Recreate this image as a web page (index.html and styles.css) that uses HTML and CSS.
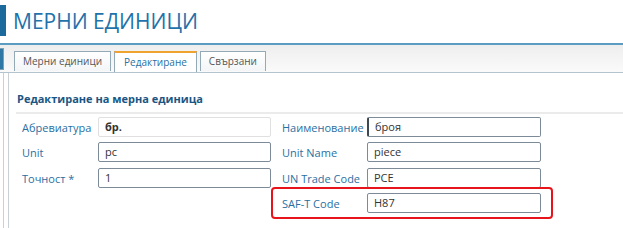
FILE: index.html
```html
<!DOCTYPE html>
<html>
  <head>
    <meta charset="UTF-8" />
    <title>Мерни единици</title>
    <link rel="stylesheet" href="styles.css">
  </head>
  <body>
    <div class="page-header">
      <span class="title-bar"></span>
      <h1>МЕРНИ ЕДИНИЦИ</h1>
    </div>

    <div class="tab-strip">
      <span class="side-tab"></span>
      <div class="tabs">
        <div class="tab">Мерни единици</div>
        <div class="tab active">Редактиране</div>
        <div class="tab">Свързани</div>
      </div>
    </div>

    <div class="workspace">
      <div class="rail"></div>
      <div class="panel">
        <div class="section-title">Редактиране на мерна единица</div>

        <div class="form-grid">
          <label class="field-label">Абревиатура</label>
          <div class="field readonly"><b>бр.</b></div>
          <label class="field-label right">Наименование</label>
          <div class="field focused">броя</div>

          <label class="field-label">Unit</label>
          <div class="field">pc</div>
          <label class="field-label right">Unit Name</label>
          <div class="field">piece</div>

          <label class="field-label">Точност *</label>
          <div class="field">1</div>
          <label class="field-label right">UN Trade Code</label>
          <div class="field">PCE</div>

          <div class="highlight">
            <label class="field-label">SAF-T Code</label>
            <div class="field">H87</div>
          </div>
        </div>
      </div>
    </div>
  </body>
</html>
```

FILE: styles.css
```css
:root {
  --title-color: #1f72aa;
  --label-color: #2a70a2;
  --heading-color: #1a5684;
  --input-border: #7d8b99;
  --panel-line: #c9d1d7;
  --tab-border: #93a9b6;
  --accent: #f0a22e;
}

body {
  margin: 0;
  font-family: "Open Sans", "Noto Sans", sans-serif;
  background-color: #ffffff;
  color: #333333;
  font-size: 11px;
}

.page-header {
  display: flex;
  align-items: flex-start;
  height: 43px;
}

.title-bar {
  width: 6px;
  height: 31px;
  margin-top: 5px;
  background-color: #1c699b;
}

.page-header h1 {
  margin: 6px 0 0 7px;
  font-size: 21px;
  font-weight: 400;
  line-height: 30px;
  color: var(--title-color);
}

.tab-strip {
  display: flex;
  align-items: flex-end;
  height: 27px;
  border-top: 2px solid #5b9dc2;
  border-bottom: 1px solid #b3c4ce;
  background: linear-gradient(#eeeeee, #fafafa);
}

.side-tab {
  width: 3px;
  height: 20px;
  margin-bottom: 2px;
  border: 1px solid #7ea0b5;
  border-left: none;
  background-color: #2f78a6;
}

.tabs {
  display: flex;
  gap: 3px;
  margin-left: 10px;
}

.tab {
  height: 19px;
  padding: 0 8px;
  border: 1px solid var(--tab-border);
  border-bottom: none;
  background: linear-gradient(#ffffff, #f3f5f6);
  color: #555555;
  font-size: 10px;
  line-height: 19px;
}

.tab.active {
  padding: 0 9px;
  border-top: 2px solid var(--accent);
  background: #ffffff;
  color: var(--label-color);
  line-height: 18px;
}

.workspace {
  display: flex;
  height: 155px;
}

.rail {
  width: 3px;
  border-right: 1px solid var(--panel-line);
}

.panel {
  flex: 1;
  margin-left: 4px;
  border-left: 1px solid var(--panel-line);
  padding: 0 0 0 7px;
}

.section-title {
  margin-top: 18px;
  padding: 0 0 6px 1px;
  border-bottom: 2px solid #ebebeb;
  color: var(--heading-color);
  font-size: 11px;
  font-weight: 700;
  line-height: 15px;
}

.form-grid {
  display: grid;
  grid-template-columns: 76px 173px 96px 174px;
  grid-auto-rows: 20px;
  row-gap: 5.3px;
  margin: 3px 0 0 6px;
}

.field-label {
  color: var(--label-color);
  font-size: 11px;
  line-height: 21px;
  white-space: nowrap;
}

.field-label.right {
  padding-left: 11px;
}

.field {
  box-sizing: border-box;
  height: 20px;
  padding-left: 6px;
  border: 1.5px solid var(--input-border);
  border-radius: 2px;
  font-size: 11px;
  line-height: 17px;
  color: #333333;
}

.field.readonly {
  border: 1px solid #e0e0e0;
  line-height: 18px;
}

.field.focused {
  border-left: 2.5px solid #3c4854;
}

.highlight {
  grid-column: 3 / 5;
  display: grid;
  grid-template-columns: 85px 174px;
  margin: -6px -12px -6px 0;
  padding: 4px 10px 4px 9px;
  border: 2px solid #e8141c;
  border-radius: 4px;
}
```
